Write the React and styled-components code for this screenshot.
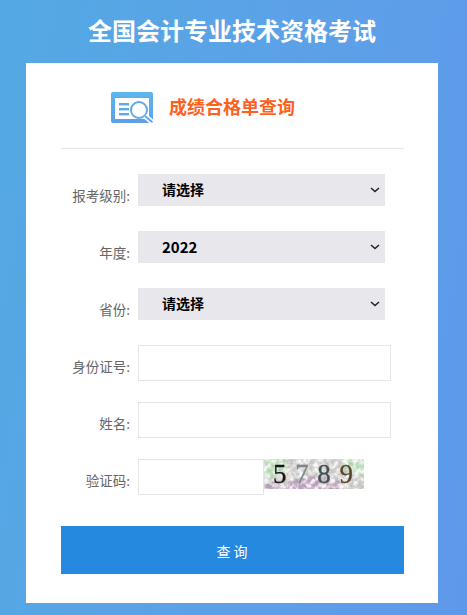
import React from 'react';
import styled, { createGlobalStyle } from 'styled-components';

const Global = createGlobalStyle`
	html, body {
		margin: 0;
		padding: 0;
	}
	body {
		font-family: 'Noto Sans CJK SC', 'Noto Sans', sans-serif;
	}
`;

const Page = styled.div`
	width: 467px;
	height: 615px;
	overflow: hidden;
	box-sizing: border-box;
	background: linear-gradient(100deg, #53a9e3 0%, #5da0e8 60%, #5e98ea 100%);
`;

const PageTitle = styled.h1`
	margin: 0;
	height: 63px;
	padding-right: 3px;
	line-height: 59px;
	font-size: 24px;
	font-weight: 700;
	color: #fff;
	text-align: center;
`;

const Card = styled.div`
	margin: 0 29px 0 26px;
	padding: 30px 34px 29px 35px;
	background: #fff;
`;

const CardHeader = styled.div`
	display: flex;
	align-items: center;
	gap: 14px;
	height: 30px;
	padding: 0 0 25px 50px;
	border-bottom: 1px solid #e6e6e6;
	margin-bottom: 25px;
`;

const CardTitle = styled.h2`
	margin: -5px 0 0;
	font-size: 18px;
	font-weight: 700;
	color: #ff5f1f;
`;

const Field = styled.div`
	display: flex;
	height: 57px;
	gap: 8px;
`;

const Label = styled.label`
	width: 69px;
	flex: none;
	text-align: right;
	font-size: 13.5px;
	line-height: 42px;
	color: #666;
	white-space: nowrap;
`;

const chevron = `url("data:image/svg+xml,%3Csvg xmlns='http://www.w3.org/2000/svg' width='10' height='6'%3E%3Cpath d='M1 1l4 3.6L9 1' fill='none' stroke='%23222' stroke-width='1.5'/%3E%3C/svg%3E")`;

const Select = styled.select`
	appearance: none;
	width: 247px;
	height: 32px;
	padding: 0 0 2px 24px;
	border: 0;
	border-radius: 0;
	background: #e8e7ec ${chevron} no-repeat 232px 13px;
	color: #000;
	font-family: inherit;
	font-size: ${(p) => p.$size || 14}px;
	font-weight: 700;
	outline: none;
`;

const Input = styled.input`
	width: ${(p) => p.$width}px;
	height: 36px;
	box-sizing: border-box;
	margin: 0;
	padding: 0 8px;
	border: 1px solid #e6e6e6;
	background: #fff;
	outline: none;
`;

const CaptchaRow = styled.div`
	display: flex;
	align-items: flex-start;
`;

const Captcha = styled.div`
	position: relative;
	width: 100px;
	height: 30px;
	overflow: hidden;
	background: #d8d0d6;
`;

const CaptchaNoise = styled.svg`
	position: absolute;
	inset: 0;
	width: 100%;
	height: 100%;
`;

const CaptchaText = styled.div`
	position: relative;
	display: flex;
	justify-content: space-between;
	padding: 0 11px 0 9px;
	font-family: 'Liberation Serif', serif;
	font-size: 27px;
	line-height: 30px;
	-webkit-text-stroke: 0.3px currentColor;
	filter: blur(0.5px);
`;

const Digit = styled.span`
	color: ${(p) => p.$color};
`;

const Submit = styled.button`
	display: block;
	width: 100%;
	height: 48px;
	margin-top: 10px;
	border: 0;
	padding: 2px 0 0 2px;
	background: #2689e0;
	color: #fff;
	font-family: inherit;
	font-size: 14px;
	letter-spacing: 3px;
`;

function SearchIcon() {
	return (
		<svg width="44" height="32" viewBox="0 0 44 32" style={{ flex: 'none' }}>
			<defs>
				<linearGradient id="icon" x1="0" y1="0" x2="0" y2="1">
					<stop offset="0" stopColor="#5cb5ee" />
					<stop offset="1" stopColor="#5f9fe8" />
				</linearGradient>
			</defs>
			<rect x="0" y="0" width="42" height="31" rx="2" fill="url(#icon)" />
			<rect x="4" y="6" width="34" height="21" fill="#fff" />
			<rect x="8" y="11" width="10" height="2.4" fill="#5ea9ea" />
			<rect x="8" y="16" width="10" height="2.4" fill="#5ea9ea" />
			<rect x="8" y="21" width="10" height="2.4" fill="#5ea9ea" />
			<circle cx="28" cy="18" r="8" fill="#fff" stroke="#5ea9ea" strokeWidth="2" />
			<path d="M34 24 L41 30" stroke="#fff" strokeWidth="5" />
			<path d="M34 24 L41 30" stroke="#5ea9ea" strokeWidth="2.2" />
		</svg>
	);
}

function CaptchaImage() {
	return (
		<Captcha>
			<CaptchaNoise viewBox="0 0 100 30" preserveAspectRatio="none">
				<filter id="noise">
					<feTurbulence type="fractalNoise" baseFrequency="0.2" numOctaves="3" seed="7" />
					<feColorMatrix values="0 0 0 0 0.96  0 0 0 0 0.96  0 0 0 0 0.96  2.6 0 0 0 -0.95" />
				</filter>
				<filter id="grain">
					<feTurbulence type="fractalNoise" baseFrequency="0.3" numOctaves="2" seed="21" />
					<feColorMatrix values="0 0 0 0 0.45  0 0 0 0 0.47  0 0 0 0 0.45  2.4 0 0 0 -1.05" />
				</filter>
				<rect width="100" height="30" fill="#cfcbc9" />
				<ellipse cx="6" cy="7" rx="18" ry="11" fill="#b6dfb4" />
				<ellipse cx="95" cy="6" rx="15" ry="10" fill="#c0e4bc" />
				<ellipse cx="50" cy="28" rx="30" ry="10" fill="#bc97b8" />
				<ellipse cx="9" cy="27" rx="8" ry="4" fill="#b89ab5" />
				<rect width="100" height="30" filter="url(#grain)" />
				<rect width="100" height="30" filter="url(#noise)" />
			</CaptchaNoise>
			<CaptchaText>
				<Digit $color="#16161a">5</Digit>
				<Digit $color="#7d858e">7</Digit>
				<Digit $color="#3f5052">8</Digit>
				<Digit $color="#57462a">9</Digit>
			</CaptchaText>
		</Captcha>
	);
}

export default function App() {
	return (
		<Page>
			<Global />
			<PageTitle>全国会计专业技术资格考试</PageTitle>
			<Card>
				<CardHeader>
					<SearchIcon />
					<CardTitle>成绩合格单查询</CardTitle>
				</CardHeader>
				<Field>
					<Label>报考级别:</Label>
					<Select defaultValue="">
						<option value="">请选择</option>
					</Select>
				</Field>
				<Field>
					<Label>年度:</Label>
					<Select defaultValue="2022" $size={15}>
						<option value="2022">2022</option>
					</Select>
				</Field>
				<Field>
					<Label>省份:</Label>
					<Select defaultValue="">
						<option value="">请选择</option>
					</Select>
				</Field>
				<Field>
					<Label>身份证号:</Label>
					<Input $width={253} />
				</Field>
				<Field>
					<Label>姓名:</Label>
					<Input $width={253} />
				</Field>
				<Field>
					<Label>验证码:</Label>
					<CaptchaRow>
						<Input $width={126} />
						<CaptchaImage />
					</CaptchaRow>
				</Field>
				<Submit>查询</Submit>
			</Card>
		</Page>
	);
}
